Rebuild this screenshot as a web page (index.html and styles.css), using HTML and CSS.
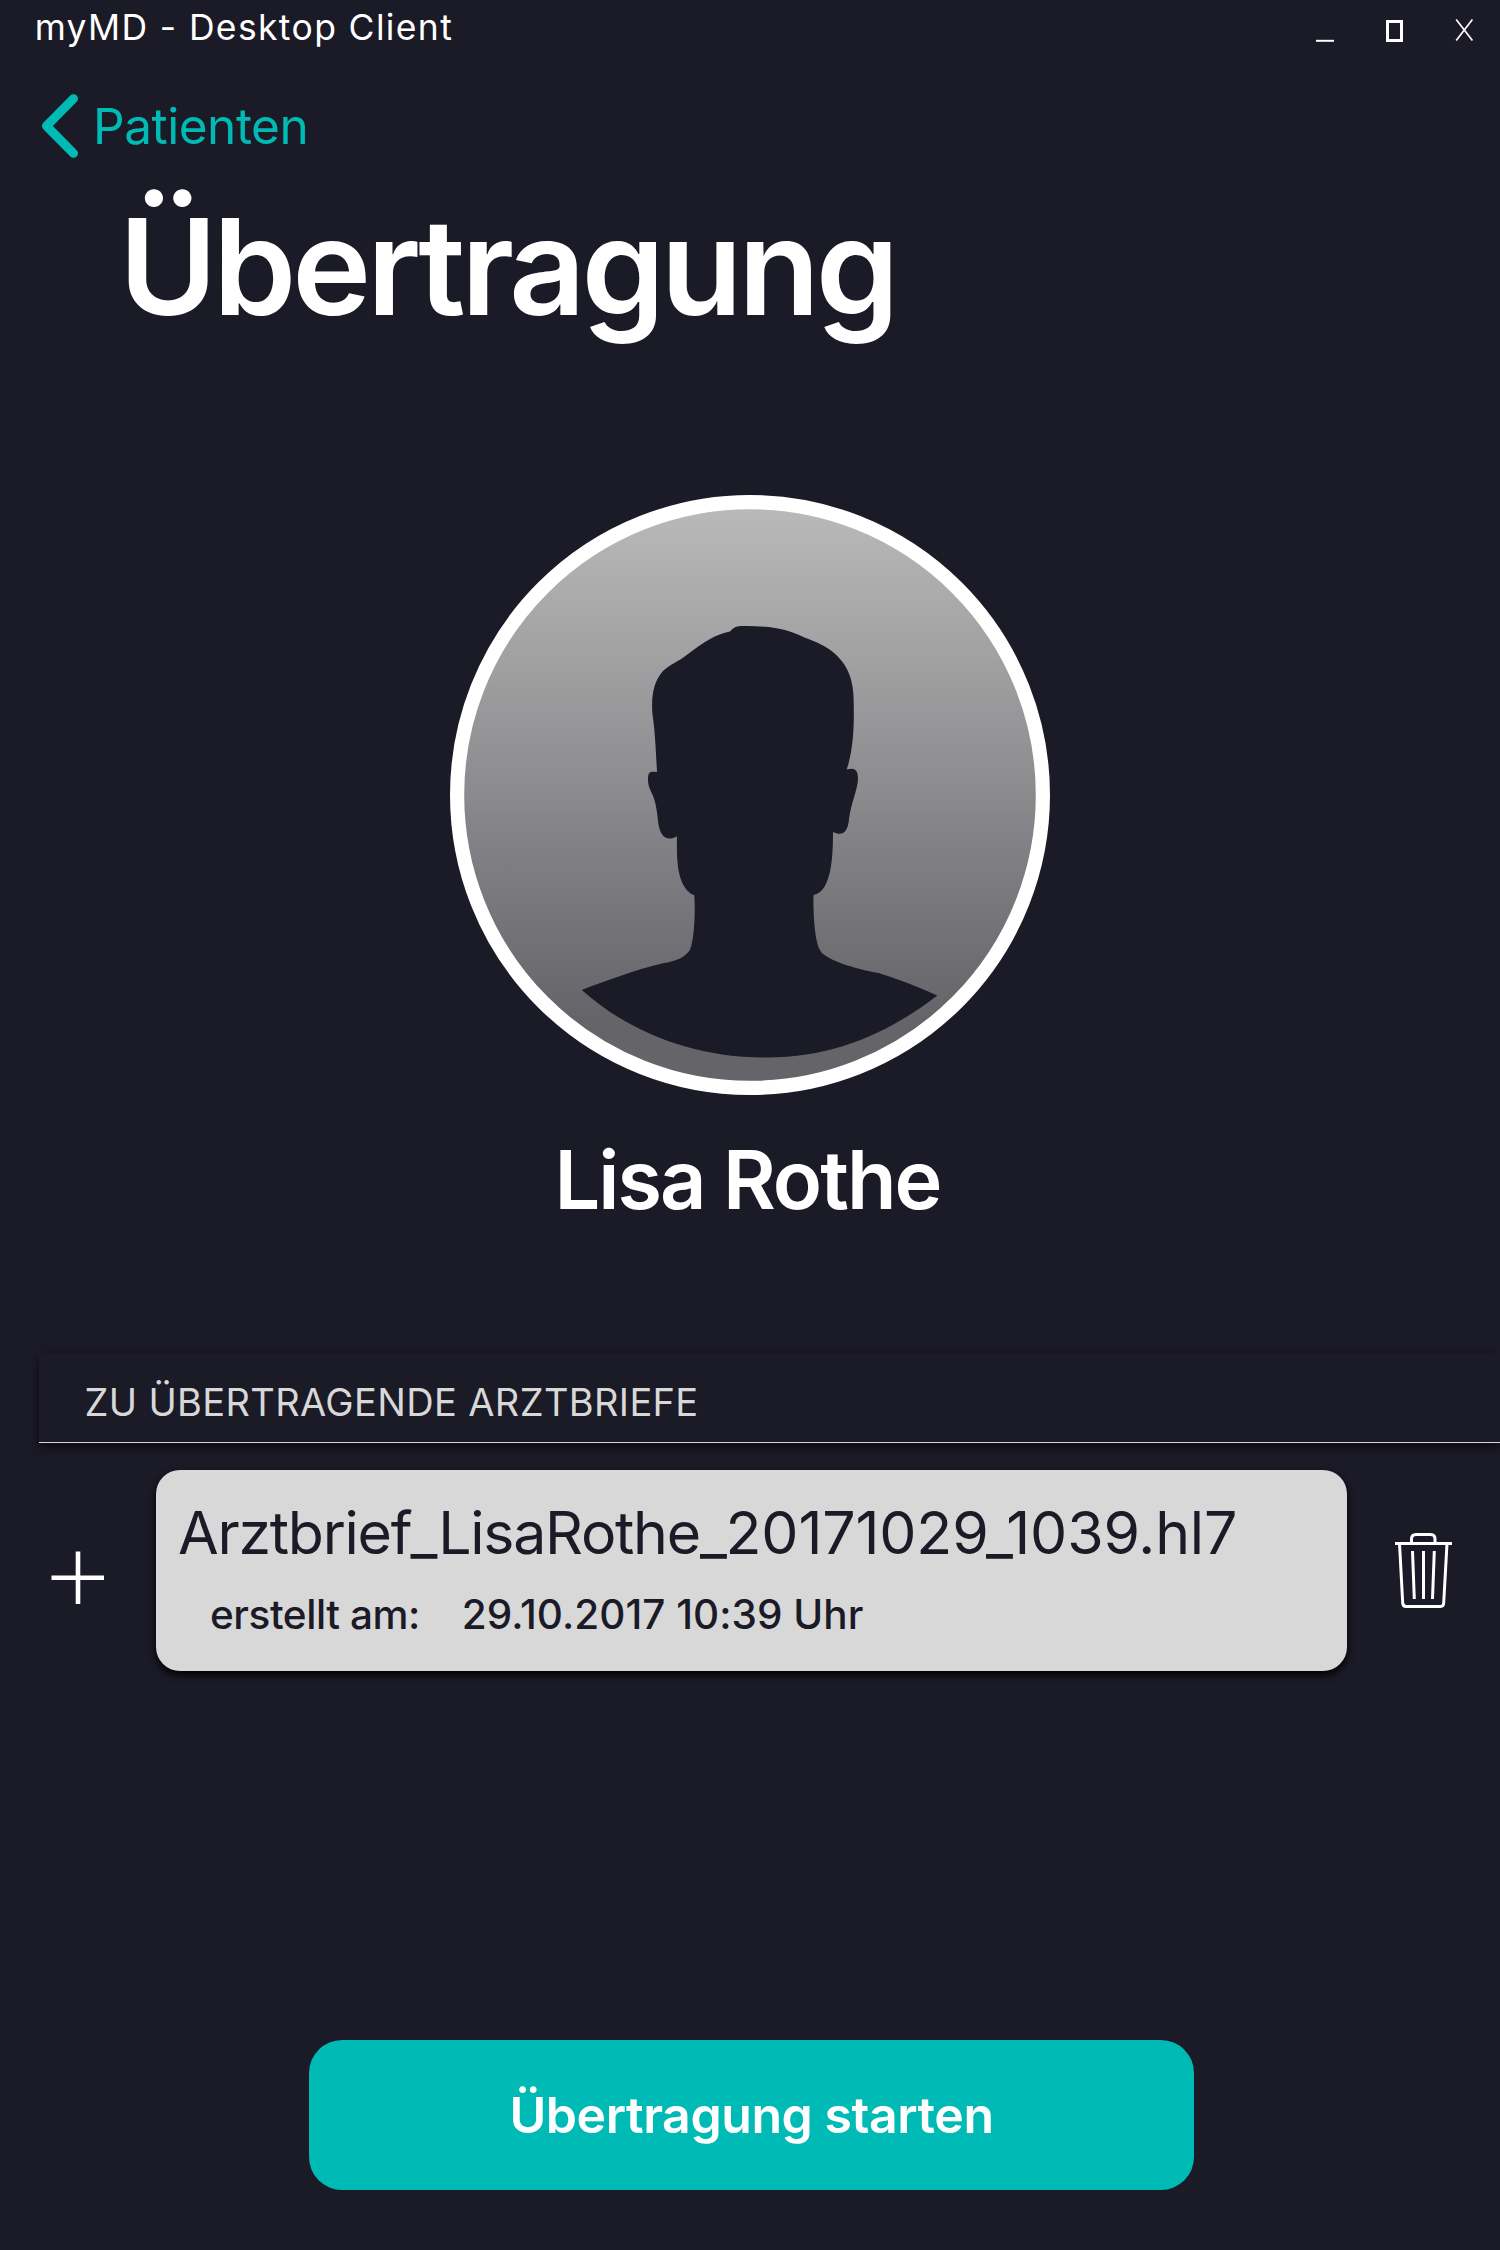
FILE: index.html
```
<!DOCTYPE html>
<html lang="de">
<head>
<meta charset="utf-8">
<title>myMD - Desktop Client</title>
<link rel="stylesheet" href="styles.css">
</head>
<body>
<div class="window">
  <header class="titlebar">
    <span class="titlebar-text">myMD - Desktop Client</span>
    <div class="window-controls">
      <svg class="control" width="20" height="26" viewBox="0 0 20 26"><path d="M1 22.8H19" stroke-width="2"/></svg>
      <svg class="control" width="20" height="26" viewBox="0 0 20 26"><path d="M2.5 3.5H16.5V22.5H2.5Z" stroke-width="3"/></svg>
      <svg class="control" width="20" height="26" viewBox="0 0 20 26"><path d="M2.2 1.6L18.4 22.4M18.4 1.6L2.2 22.4" stroke-width="1.7"/></svg>
    </div>
  </header>

  <nav class="back">
    <svg class="chevron" width="40" height="68" viewBox="0 0 40 68"><path d="M33.5 6.7L6.5 34L33.5 61.3"/></svg>
    <span class="back-label">Patienten</span>
  </nav>

  <h1 class="title">Übertragung</h1>

  <section class="patient">
    <svg class="avatar" width="600" height="600" viewBox="450 495 600 600">
      <defs>
        <linearGradient id="avatar-fill" x1="0" y1="0" x2="0" y2="1">
          <stop offset="0" stop-color="#bababb"/>
          <stop offset="0.51" stop-color="#8a8a8c"/>
          <stop offset="0.54" stop-color="#868589"/>
          <stop offset="0.88" stop-color="#656469"/>
          <stop offset="1" stop-color="#656469"/>
        </linearGradient>
      </defs>
      <circle class="avatar-ring" cx="750" cy="795" r="292.9" fill="url(#avatar-fill)"/>
      <path class="silhouette" d="M730 631.5C734 627 737 626 743 626C760 625.7 776 627.500 785 630C795 633 802 636.500 811 640C838 650 852.5 668 853.500 696C854.5 725 853.500 749 846.700 769.500C854 767.500 858 769 858 779C857.500 790 851 803 849 819C848 831 843.500 837 833 832C833 852 832.500 892 813.500 895C813 910 814.500 941 820 950C823 959 855 969 878.500 973Q905 981 937.300 995.500C890 1032 835 1057.500 767 1057.500C695 1058 630 1033 581.700 990C605 981 635 970 660 964C672 961.500 683 960 690 950C694 940 695.500 915 694.300 895.300C677 888 676.500 860 677 836.500C668 841 660 839 658 821C655.500 790 648 793 648 779C648 771 651 771.500 657 772C656 753 655 730 652.500 715C651 698 653 682 663 671C669 665 678 662 688 654C704 642 716 634 730 631.500Z"/>
    </svg>
    <h2 class="patient-name">Lisa Rothe</h2>
  </section>

  <section class="letters">
    <h3 class="section-head">ZU ÜBERTRAGENDE ARZTBRIEFE</h3>
    <div class="letter-row">
      <div class="add-cell">
        <svg class="plus" width="54" height="54" viewBox="0 0 54 54"><path d="M27 0.500V53M0.500 26.700H53"/></svg>
      </div>
      <article class="letter-card">
        <div class="letter-name"><span class="name-patient">Arztbrief_LisaRothe_</span><span class="name-stamp">20171029_1039.hl7</span></div>
        <div class="letter-meta">
          <span class="meta-label">erstellt am:</span>
          <span class="meta-value">29.10.2017 10:39 Uhr</span>
        </div>
      </article>
      <div class="delete-cell">
        <svg class="trash" width="60" height="78" viewBox="0 0 60 78">
          <path d="M1 11.500H58"/>
          <path d="M17.500 11V7Q17.500 2.500 22 2.500H36.500Q41 2.500 41 7V11"/>
          <path d="M5.500 11.500L8.700 71Q9 74.500 12 74.500H46.500Q49.500 74.500 49.700 71L53 11.500"/>
          <path d="M18.500 19L20.300 67M29.500 19V67M40.300 19L38.500 67"/>
        </svg>
      </div>
    </div>
  </section>

  <button class="start" type="button">Übertragung starten</button>
</div>
</body>
</html>
```
FILE: styles.css
```
* {
  box-sizing: border-box;
}

body {
  margin: 0;
  background: #1b1a27;
  color: #fff;
  font-family: Inter, "Liberation Sans", sans-serif;
}

h1, h2, h3 {
  margin: 0;
}

.window {
  display: flex;
  flex-direction: column;
  width: 1500px;
  height: 2250px;
  overflow: hidden;
}

.titlebar {
  display: flex;
  justify-content: space-between;
  height: 54px;
  padding: 0 26px 0 34.7px;
}

.titlebar-text {
  font-size: 35.5px;
  line-height: 56px;
  letter-spacing: 1.36px;
}

.window-controls {
  display: flex;
  gap: 49.500px;
  padding-top: 18px;
}

.control {
  fill: none;
  stroke: #fff;
}

.back {
  display: flex;
  align-items: center;
  height: 144px;
  padding-left: 40px;
  gap: 13px;
  color: #00bab6;
}

.chevron path {
  fill: none;
  stroke: currentColor;
  stroke-width: 9;
  stroke-linecap: round;
  stroke-linejoin: round;
}

.back-label {
  font-size: 49.5px;
  letter-spacing: -0.47px;
}

.title {
  padding-left: 119px;
  font-size: 133.5px;
  font-weight: 600;
  line-height: 137px;
  letter-spacing: -4.15px;
}

.patient {
  display: flex;
  flex-direction: column;
  align-items: center;
  margin-top: 160px;
}

.avatar-ring {
  stroke: #fff;
  stroke-width: 14.2;
}

.silhouette {
  fill: #1b1a27;
}

.patient-name {
  padding-right: 5px;
  font-size: 81px;
  font-weight: 600;
  line-height: 171px;
  letter-spacing: -1.99px;
}

.letters {
  margin-top: 87px;
}

.section-head {
  height: 90px;
  margin-left: 39px;
  padding: 9px 0 0 45.5px;
  border-bottom: 1px solid #d8d8d8;
  box-shadow: 0 4px 11px rgba(0, 0, 0, 0.6);
  color: #d8d8d8;
  font-size: 38px;
  font-weight: 400;
  line-height: 80px;
  letter-spacing: 0.36px;
}

.letter-row {
  display: grid;
  grid-template-columns: 156px 1191px 153px;
  margin-top: 27px;
}

.add-cell {
  padding: 81px 0 0 51px;
}

.plus path {
  fill: none;
  stroke: #fff;
  stroke-width: 4.6;
}

.letter-card {
  height: 201px;
  padding: 22px 0 0 22px;
  border-radius: 24px;
  background: #d8d8d8;
  box-shadow: 0 4px 9px #000;
  color: #1b1a27;
}

.letter-name {
  font-size: 59px;
  line-height: 81px;
}

.name-patient {
  letter-spacing: -1.25px;
}

.name-stamp {
  letter-spacing: -0.17px;
}

.letter-meta {
  display: flex;
  gap: 42px;
  margin-top: 12px;
  padding-left: 32px;
  font-size: 40.5px;
  font-weight: 500;
  line-height: 60px;
}

.meta-label {
  letter-spacing: -0.454px;
}

.meta-value {
  letter-spacing: 0.03px;
}

.delete-cell {
  padding: 62px 0 0 47px;
}

.trash path {
  fill: none;
  stroke: #fff;
  stroke-width: 3;
}

.start {
  align-self: flex-start;
  width: 885px;
  height: 150px;
  margin: 369px 0 0 309px;
  padding: 0;
  border: 0;
  border-radius: 33px;
  background: #00bab6;
  color: #fff;
  font-family: inherit;
  font-size: 50px;
  font-weight: 600;
  letter-spacing: -0.442px;
}
```
